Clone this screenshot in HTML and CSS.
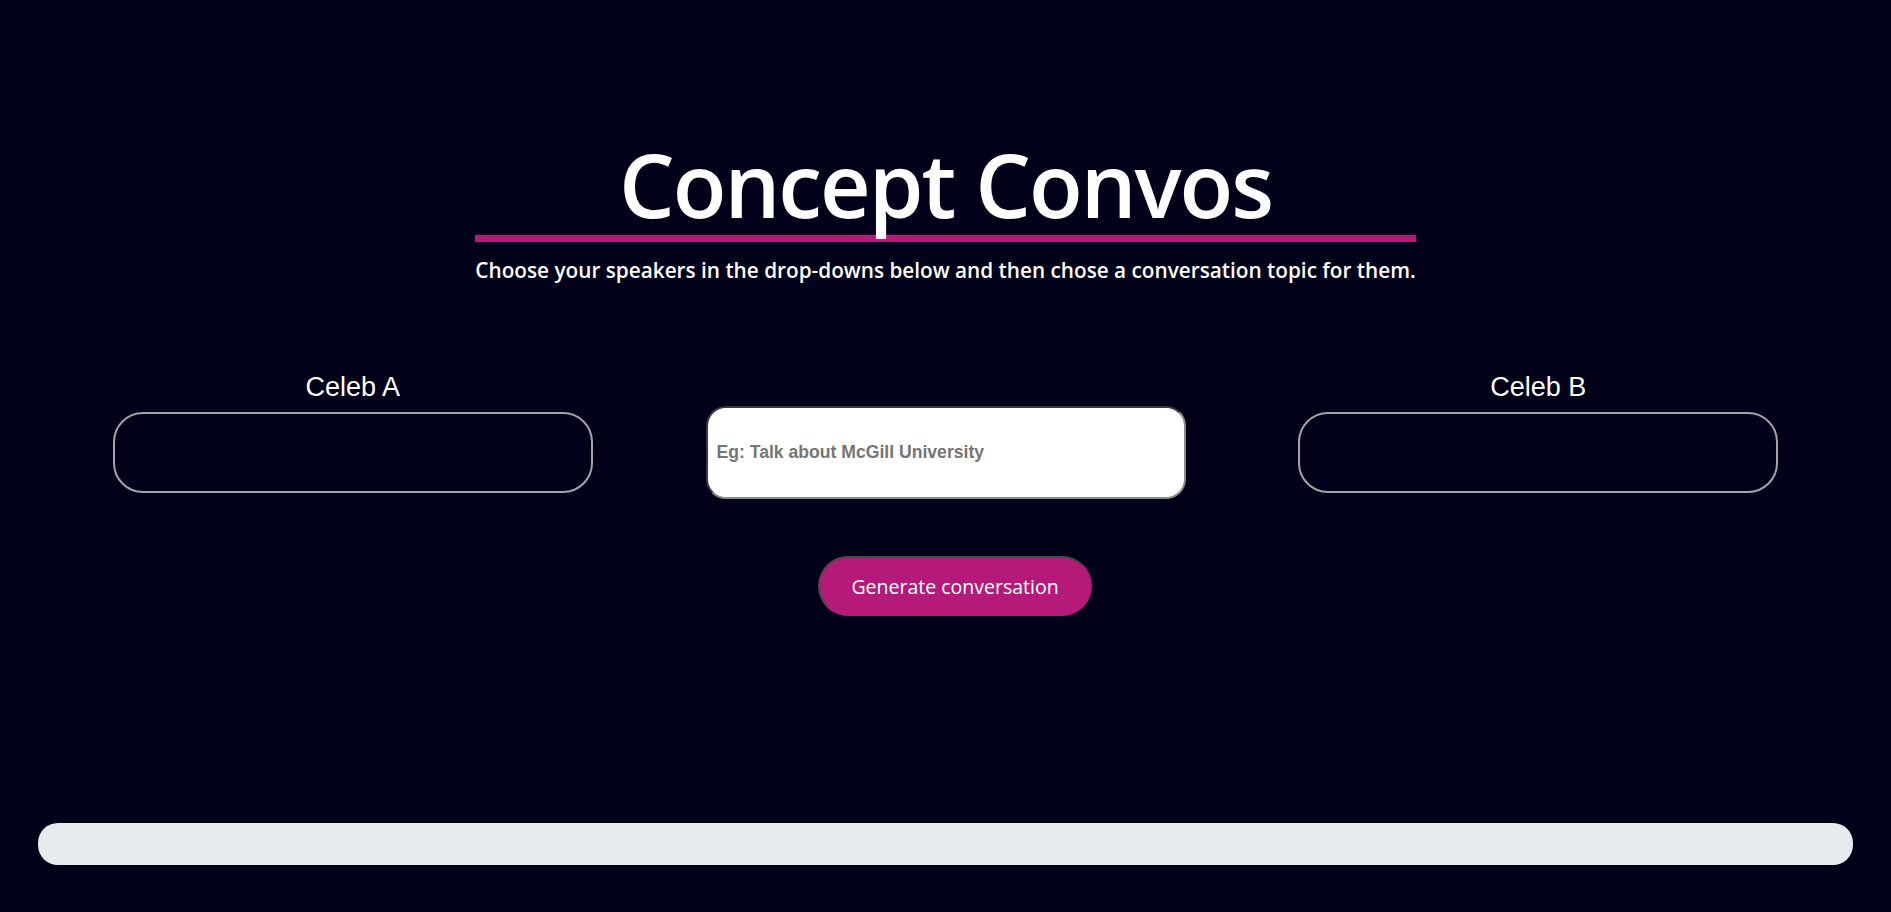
FILE: index.html
```html
<!DOCTYPE html>
<html lang="en">
<head>
<meta charset="utf-8">
<title>Concept Convos</title>
<link rel="stylesheet" href="styles.css">
</head>
<body>
<main class="page">
  <header class="hero">
    <h1 class="hero__title">Concept Convos</h1>
    <p class="hero__subtitle">Choose your speakers in the drop-downs below and then chose a conversation topic for them.</p>
  </header>

  <section class="picker">
    <div class="picker__col">
      <label class="picker__label" for="celebA">Celeb A</label>
      <select class="picker__select" id="celebA"></select>
    </div>
    <div class="picker__col picker__col--topic">
      <input class="picker__topic" type="text" placeholder="Eg: Talk about McGill University">
    </div>
    <div class="picker__col">
      <label class="picker__label" for="celebB">Celeb B</label>
      <select class="picker__select" id="celebB"></select>
    </div>
  </section>

  <div class="actions">
    <button class="actions__generate" type="button">Generate conversation</button>
  </div>

  <div class="output"></div>
</main>
</body>
</html>
```

FILE: styles.css
```css
* {
  box-sizing: border-box;
}

html, body {
  margin: 0;
  padding: 0;
  background: #01011a;
}

body {
  font-family: "Open Sans", "Noto Sans", sans-serif;
  color: #ffffff;
}

.page {
  display: flex;
  flex-direction: column;
  min-height: 912px;
}

.hero {
  width: fit-content;
  margin: 140px auto 0;
  display: flex;
  flex-direction: column;
}

.hero__title {
  margin: 0;
  font-size: 88px;
  line-height: 88px;
  font-weight: 600;
  letter-spacing: -2px;
  text-align: center;
  padding-bottom: 7px;
  border-bottom: 7px solid #b5197a;
}

.hero__subtitle {
  margin: 14px 0 0;
  font-size: 20.75px;
  line-height: 28px;
  font-weight: 600;
  white-space: nowrap;
}

.picker {
  margin-top: 89px;
  display: flex;
  justify-content: space-evenly;
  align-items: flex-start;
}

.picker__col {
  width: 480px;
  display: flex;
  flex-direction: column;
  align-items: center;
}

.picker__col--topic {
  padding-top: 33px;
}

.picker__label {
  font-family: "Liberation Sans", Arial, sans-serif;
  font-size: 27px;
  line-height: 29px;
  margin-bottom: 10px;
}

.picker__select {
  width: 480px;
  height: 81px;
  background: transparent;
  border: 2px solid #a3a3a8;
  border-radius: 30px;
  appearance: none;
  -webkit-appearance: none;
  outline: none;
}

.picker__topic {
  width: 480px;
  height: 93px;
  background: #ffffff;
  border-style: solid;
  border-width: 2px;
  border-color: #3a3a3a #8a8a8a #8a8a8a #3a3a3a;
  border-radius: 20px;
  padding: 0 9px;
  font-family: "Liberation Sans", Arial, sans-serif;
  font-size: 17.6px;
  font-weight: 700;
  color: #333;
  outline: none;
}

.picker__topic::placeholder {
  color: #757575;
  opacity: 1;
}

.actions {
  margin-top: 57px;
  display: flex;
  justify-content: center;
  padding-left: 19px;
}

.actions__generate {
  height: 60px;
  padding: 0 31px;
  background: #b5197a;
  color: #ffffff;
  font-family: "Open Sans", "Noto Sans", sans-serif;
  font-size: 19.5px;
  border-style: solid;
  border-width: 2px;
  border-color: #4a4a4a #b5197a #b5197a #4a4a4a;
  border-radius: 30px;
  cursor: pointer;
}

.output {
  margin: 207px 38px 0;
  height: 42px;
  background: #e8ebee;
  border-radius: 20px;
}
```
